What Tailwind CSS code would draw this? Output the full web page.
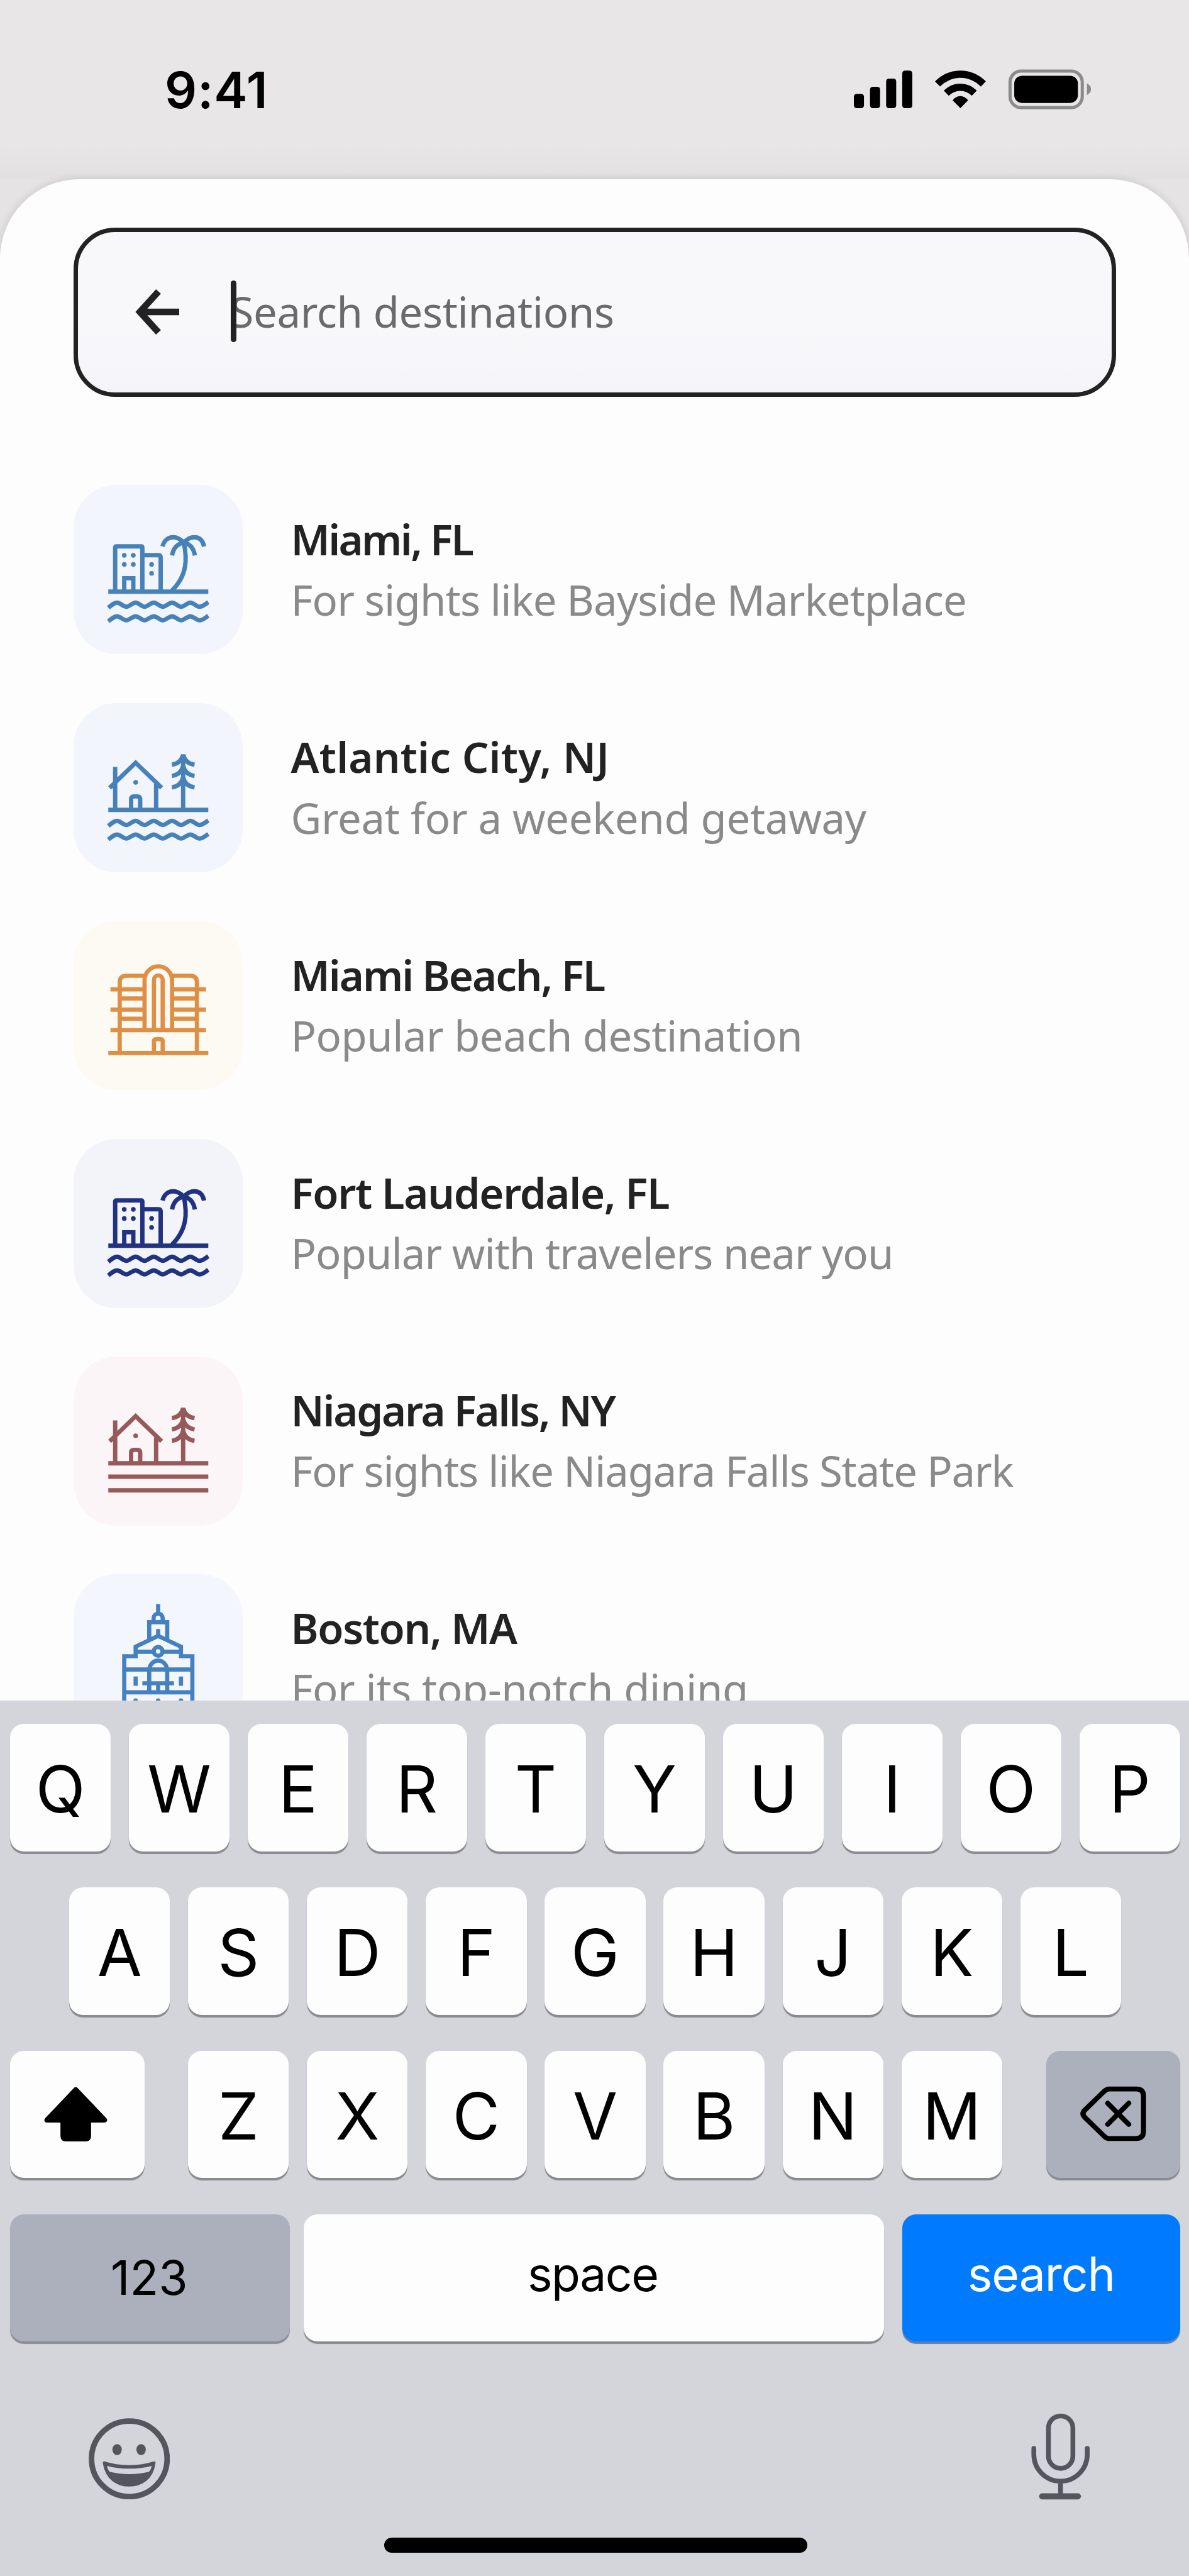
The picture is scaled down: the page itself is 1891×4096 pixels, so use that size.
<!DOCTYPE html>
<html lang="en">
<head>
<meta charset="utf-8">
<title>Search destinations</title>
<script src="https://cdn.jsdelivr.net/npm/@tailwindcss/browser@4"></script>
</head>
<body class="bg-[#e8e6e7]">

<!-- Shared icon shapes -->
<svg class="hidden" xmlns="http://www.w3.org/2000/svg">
  <defs>
    <g id="waves">
      <path d="M222 770C245 752 258 740 275 740S312 764 330 764 366 740 385 740 420 764 438 764 474 740 493 740 529 764 547 764 583 740 602 740 638 764 656 764 692 740 711 740 747 764 765 764C785 764 796 751 818 737"/>
      <path d="M222 851C245 833 258 821 275 821S312 845 330 845 366 821 385 821 420 845 438 845 474 821 493 821 529 845 547 845 583 821 602 821 638 845 656 845 692 821 711 821 747 845 765 845C785 845 796 832 818 818"/>
    </g>
    <g id="city-palm">
      <path d="M222 674H818M263 674V412q0-8 8-8H417q8 0 8 8V674M425 457H520q14 0 14 14V674M317 674V594H371V674"/>
      <path d="M672 382C693 480 692 580 601 668M545 405C555 366 582 350 608 350C635 350 655 364 672 382C688 364 708 350 735 350C761 350 784 366 793 405M602 458C610 412 636 388 672 382C706 388 730 412 738 458"/>
      <g fill="currentColor" stroke="none"><circle cx="317" cy="458" r="14"/><circle cx="371" cy="458" r="14"/><circle cx="317" cy="512" r="14"/><circle cx="371" cy="512" r="14"/><circle cx="480" cy="512" r="14"/><circle cx="480" cy="565" r="14"/></g>
    </g>
    <g id="house-pine">
      <path d="M222 674H818M230 543L385 393L540 543M263 418V674M507 520V674M358 674V611q0-17 17-17H395q17 0 17 17V674M668 345V674"/>
      <path d="M601 405C635 400 660 380 668 345C676 380 701 400 736 405M601 472C635 467 660 447 668 412C676 447 701 467 736 472M601 540C635 535 660 515 668 480C676 515 701 535 736 540"/>
      <circle cx="385" cy="510" r="14" fill="currentColor" stroke="none"/>
    </g>
  </defs>
</svg>

<main class="flex h-[4096px] w-[1891px] flex-col overflow-hidden bg-[#e8e6e7] font-['Noto_Sans',sans-serif]">

  <!-- Status bar -->
  <header class="flex h-[284.5px] shrink-0 items-start justify-between bg-linear-to-b from-[#e8e6e7] from-80% to-[#e2e0e1] pr-[155px] pl-[262px]">
    <div class="mt-[93px] font-['Inter',sans-serif] text-[80px] leading-[100px] font-semibold tracking-[0.8px] text-black">9:41</div>
    <svg class="mt-[109.5px] h-[64.1px] w-[378.5px]" viewBox="73 80 1417 240">
      <g fill="#000">
        <rect x="73" y="227" width="60" height="85" rx="17"/>
        <rect x="169" y="185" width="60" height="127" rx="17"/>
        <rect x="265" y="136" width="60" height="176" rx="17"/>
        <rect x="361" y="88" width="60" height="224" rx="17"/>
        <path d="M707 312L661 265Q681 240 707 240T753 265Z"/>
      </g>
      <g fill="none" stroke="#000" stroke-width="43">
        <path d="M571 168Q630 110 707 110T844 168"/>
        <path d="M623 223Q660 188 707 188T790 223"/>
      </g>
      <rect x="1003" y="91" width="430" height="218" rx="66" fill="none" stroke="#8c8b8c" stroke-width="19"/>
      <rect x="1028" y="119" width="379" height="162" rx="46" fill="#000"/>
      <path d="M1461 164Q1485 177 1485 199T1461 234Z" fill="#8c8b8c"/>
    </svg>
  </header>

  <!-- Search sheet -->
  <div class="h-[2419.2px] shrink-0 bg-[#e5e3e4]">
  <section class="h-full overflow-hidden rounded-t-[126px] bg-[#fefdfe] px-[116.5px] pt-[77px] shadow-[0_0_14px_rgba(0,0,0,0.14)]">
    <div class="flex h-[269.5px] w-[1658px] items-center rounded-[66px] border-[7px] border-[#222] bg-linear-to-b from-[#f8f7fa] from-60% to-[#f5f4f8] pl-[91px]">
      <svg class="h-[72px] w-[70px] shrink-0" viewBox="0 0 70 72" fill="none" stroke="#222" stroke-width="10.5"><path d="M70 36H8M37 3.5L7.500 36L37 68.500"/></svg>
      <div class="relative ml-[82px] pb-[2px] text-[67px] leading-[96px] tracking-[-0.33px] text-[#6a6a6a]">Search destinations
        <span class="absolute top-[-1px] left-0 h-[98px] w-[9.500px] rounded-full bg-[#222]"></span>
      </div>
    </div>

    <ul class="mt-[140.4px] flex flex-col gap-[77.4px] whitespace-nowrap">
      <li class="flex items-center gap-[77px]">
        <div class="size-[269px] shrink-0 overflow-hidden rounded-[68px] bg-[#f3f5fd]">
          <svg class="size-full text-[#4681b8]" viewBox="15 38 1008 1008" fill="none" stroke="currentColor" stroke-width="26"><use href="#city-palm"/><use href="#waves"/></svg>
        </div>
        <div class="mb-[1px] text-[67px] leading-[96.4px]">
          <h2 class="font-semibold tracking-[-2.6px] text-[#222]">Miami, FL</h2>
          <p class="tracking-[-0.8px] text-[#8a8a8a]">For sights like Bayside Marketplace</p>
        </div>
      </li>
      <li class="flex items-center gap-[77px]">
        <div class="size-[269px] shrink-0 overflow-hidden rounded-[68px] bg-[#f3f5fd]">
          <svg class="size-full text-[#4681b8]" viewBox="15 38 1008 1008" fill="none" stroke="currentColor" stroke-width="26"><use href="#house-pine"/><use href="#waves"/></svg>
        </div>
        <div class="mb-[1px] text-[67px] leading-[96.4px]">
          <h2 class="font-semibold tracking-[0.2px] text-[#222]">Atlantic City, NJ</h2>
          <p class="tracking-[-0.28px] text-[#8a8a8a]">Great for a weekend getaway</p>
        </div>
      </li>
      <li class="flex items-center gap-[77px]">
        <div class="size-[269px] shrink-0 overflow-hidden rounded-[68px] bg-[#fdf9f3]">
          <svg class="size-full text-[#df8f43]" viewBox="15 38 1008 1008" fill="none" stroke="currentColor" stroke-width="25">
            <path d="M222 826H818M290 826V405q0-39 39-39H438M750 826V405q0-39-39-39H602M438 690V392a82 82 0 0 1 164 0V690M494 690V390a26 26 0 0 1 52 0V690M494 826V757q0-13 13-13H533q13 0 13 13V826"/>
            <path d="M235 447H438M602 447H804M290 501H438M602 501H750M235 568H438M602 568H804M290 622H438M602 622H750M235 690H804"/>
          </svg>
        </div>
        <div class="mb-[1px] text-[67px] leading-[96.4px]">
          <h2 class="font-semibold tracking-[-2px] text-[#222]">Miami Beach, FL</h2>
          <p class="tracking-[-0.5px] text-[#8a8a8a]">Popular beach destination</p>
        </div>
      </li>
      <li class="flex items-center gap-[77px]">
        <div class="size-[269px] shrink-0 overflow-hidden rounded-[68px] bg-[#f2f4f9]">
          <svg class="size-full text-[#213380]" viewBox="15 38 1008 1008" fill="none" stroke="currentColor" stroke-width="26"><use href="#city-palm"/><use href="#waves"/></svg>
        </div>
        <div class="mb-[2px] text-[67px] leading-[96.4px]">
          <h2 class="font-semibold tracking-[-1.3px] text-[#222]">Fort Lauderdale, FL</h2>
          <p class="tracking-[-0.93px] text-[#8a8a8a]">Popular with travelers near you</p>
        </div>
      </li>
      <li class="flex items-center gap-[77px]">
        <div class="size-[269px] shrink-0 overflow-hidden rounded-[68px] bg-[#fcf5f8]">
          <svg class="size-full text-[#955a59]" viewBox="15 38 1008 1008" fill="none" stroke="currentColor" stroke-width="26"><use href="#house-pine"/><path d="M222 754H818M222 835H818"/></svg>
        </div>
        <div class="mb-[2px] text-[67px] leading-[96.4px]">
          <h2 class="font-semibold tracking-[-2.2px] text-[#222]">Niagara Falls, NY</h2>
          <p class="tracking-[-1.12px] text-[#8a8a8a]">For sights like Niagara Falls State Park</p>
        </div>
      </li>
      <li class="flex items-center gap-[77px]">
        <div class="size-[269px] shrink-0 overflow-hidden rounded-[68px] bg-[#f3f6fd]">
          <svg class="size-full text-[#4681bf]" viewBox="15 73 1008 1008" fill="none" stroke="currentColor" stroke-width="25">
            <path d="M519 252V308M492 358V335a27 27 0 0 1 54 0V358M466 460V359H573V460M519 400V444M385 535H492M546 535H655"/>
            <path d="M317 870V562H385V505L519 441L655 505V562H723V870M317 641H723M317 777H723M425 723H613M519 723V777M385 683V738M655 683V738"/>
            <path d="M466 777V646C468 608 494 588 519 588S571 608 573 646V777"/>
            <circle cx="519" cy="533" r="26"/>
            <g fill="currentColor" stroke="none"><circle cx="385" cy="827" r="14"/><circle cx="519" cy="827" r="14"/><circle cx="655" cy="827" r="14"/></g>
          </svg>
        </div>
        <div class="mb-[2px] text-[67px] leading-[96.4px]">
          <h2 class="font-semibold tracking-[-1.4px] text-[#222]">Boston, MA</h2>
          <p class="tracking-[-0.35px] text-[#8a8a8a]">For its top-notch dining</p>
        </div>
      </li>
    </ul>
  </section>
  </div>

  <!-- Keyboard -->
  <section class="flex flex-1 flex-col bg-[#d3d5db] pt-[37.8px] font-['Inter',sans-serif] text-black">
    <div class="flex flex-col gap-[57.4px] pr-[14px] pl-[16px] text-[103px]">
      <div id="row1" class="flex h-[202.4px] justify-between"></div>
      <div id="row2" class="flex h-[202.4px] justify-center gap-[28.9px]"></div>
      <div class="flex h-[202.4px] justify-between">
        <div class="flex w-[213.5px] items-center justify-center rounded-[22px] bg-[#fefdfe] shadow-[0_4px_1px_#898a8e]">
          <svg class="mt-[-3px] mr-[4px] h-[88px] w-[103px]" viewBox="86 4141 129 110"><path d="M150.500 4148L208 4208.500H176V4240Q176 4246 170 4246H131Q125 4246 125 4240V4208.500H93Z" fill="#000" stroke="#000" stroke-width="10" stroke-linejoin="round"/></svg>
        </div>
        <div id="row3" class="flex gap-[28.9px]"></div>
        <div class="flex w-[213.5px] items-center justify-center rounded-[22px] bg-[#abb0bc] shadow-[0_4px_1px_#898c95]">
          <svg class="mt-[-2px] h-[88px] w-[105px]" viewBox="2144 4141 132 110" fill="none" stroke="#000" stroke-width="10" stroke-linejoin="round" stroke-linecap="round"><path d="M2202 4146.500H2256Q2270.500 4146.500 2270.500 4160V4231Q2270.500 4245.500 2256 4245.500H2202Q2196 4245.500 2191 4240L2153 4203Q2146 4196 2153 4189L2191 4152Q2196 4146.500 2202 4146.500ZM2199 4175L2241 4217M2241 4175L2199 4217"/></svg>
        </div>
      </div>
      <div class="flex h-[202.4px] text-[75px] leading-[90px]">
        <div class="mr-[22.9px] flex w-[444.5px] items-center justify-center rounded-[22px] bg-[#abb0bc] pr-[2px] shadow-[0_4px_1px_#898c95]">123</div>
        <div class="mr-[28.9px] flex w-[922.5px] items-center justify-center rounded-[22px] bg-[#fefdfe] pr-[4px] pb-[13px] tracking-[-1.5px] shadow-[0_4px_1px_#898a8e]">space</div>
        <div class="flex flex-1 items-center justify-center rounded-[22px] bg-[#007aff] pb-[13px] tracking-[-1px] text-white shadow-[0_4px_1px_#5f7fa8]">search</div>
      </div>
    </div>
    <div class="mt-[113.4px] flex h-[198.2px] items-start justify-between pr-[157px] pl-[140.5px]">
      <svg class="mt-[8.4px] size-[129.4px]" viewBox="78 86 484 484" fill="#54565e">
        <circle cx="320" cy="328" r="225" fill="none" stroke="#54565e" stroke-width="33"/>
        <ellipse cx="247" cy="273" rx="28" ry="33"/><ellipse cx="390" cy="273" rx="28" ry="33"/>
        <path d="M170 351C260 381 380 381 468 351C456 450 385 485 320 485S184 450 170 351Z" stroke="#54565e" stroke-width="16" stroke-linejoin="round"/>
        <path d="M187 370C270 392 370 392 453 370C450 385 445 395 437 405C370 423 270 423 203 405C195 395 190 385 187 370Z" fill="#d3d5db"/>
      </svg>
      <svg class="h-[138px] w-[95.400px]" viewBox="2046 4787 119 172" fill="none" stroke="#54565e" stroke-width="9.500" stroke-linecap="round">
        <rect x="2081.500" y="4792.500" width="48.500" height="104" rx="24.200"/>
        <path d="M2052.500 4857V4869a53 53 0 0 0 106 0V4857M2105.500 4922V4950"/>
        <path d="M2069 4952H2140" stroke-width="12"/>
      </svg>
    </div>
    <div class="ml-[610.500px] h-[24.6px] w-[673.600px] rounded-full bg-black"></div>
  </section>
</main>

<script>
  const keys = { row1: 'QWERTYUIOP', row2: 'ASDFGHJKL', row3: 'ZXCVBNM' };
  for (const [row, letters] of Object.entries(keys)) {
    for (const letter of letters) {
      const key = document.createElement('div');
      key.className = 'flex w-[160.2px] shrink-0 items-center justify-center rounded-[22px] bg-[#fefdfe] pt-[5px] leading-[120px] shadow-[0_4px_1px_#898a8e]';
      key.textContent = letter;
      document.getElementById(row).append(key);
    }
  }
</script>
</body>
</html>
